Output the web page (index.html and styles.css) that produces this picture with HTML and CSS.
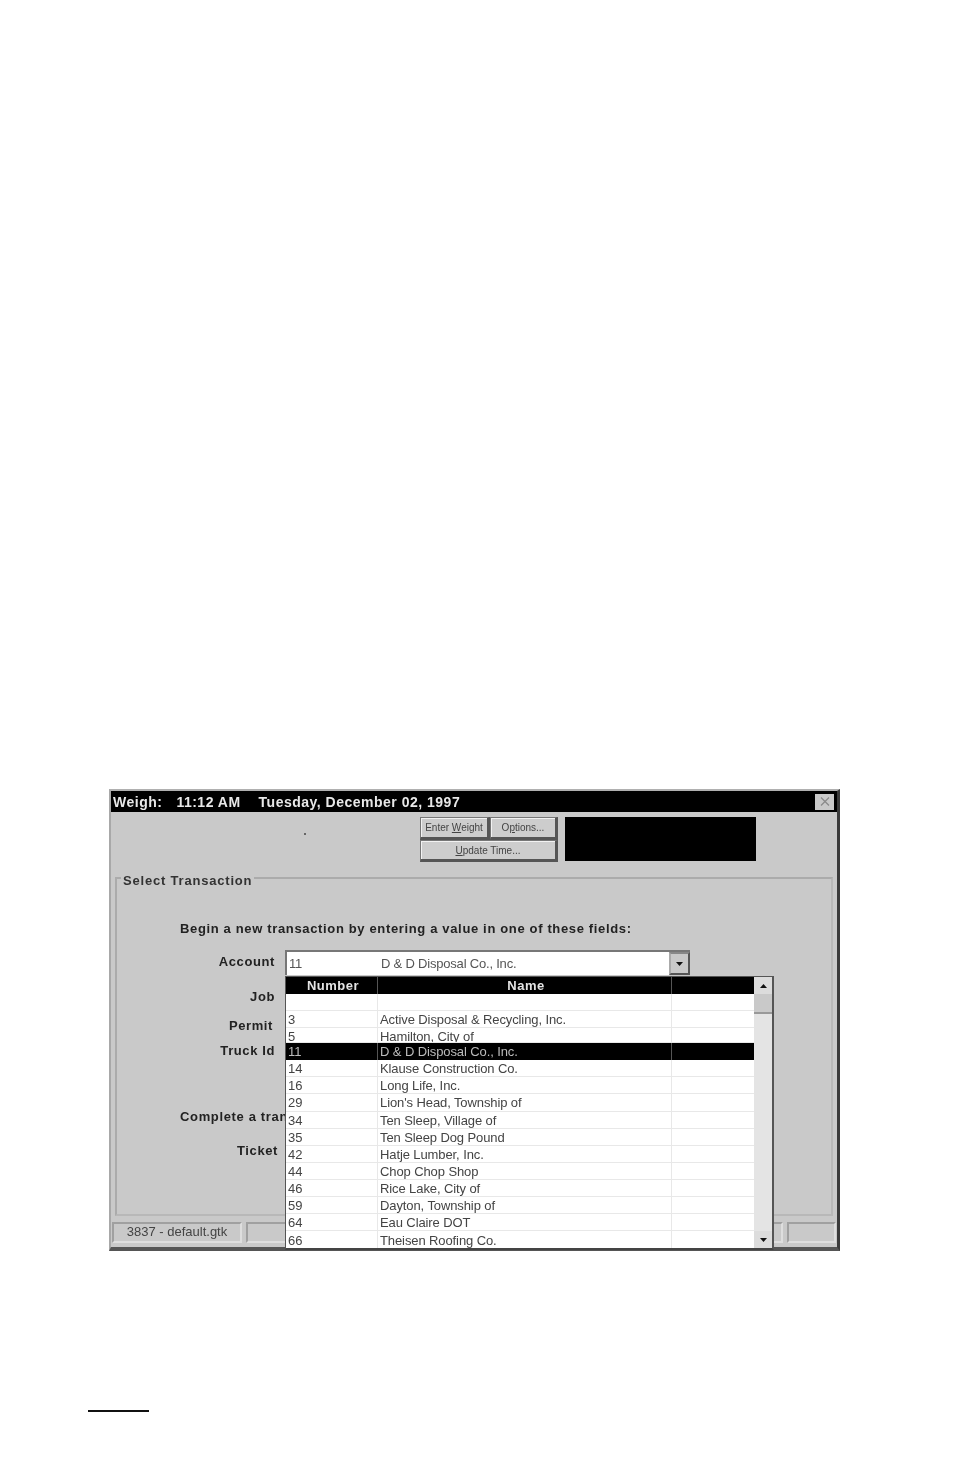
FILE: index.html
```html
<!DOCTYPE html>
<html lang="en">
<head>
<meta charset="utf-8">
<title>Weigh</title>
<link rel="stylesheet" href="styles.css">
</head>
<body>
<main class="page">
  <section class="window">
    <header class="titlebar">
      <span class="title-app">Weigh:</span>
      <span class="title-time">11:12 AM</span>
      <span class="title-date">Tuesday, December 02, 1997</span>
      <span class="close">
        <svg width="12" height="11" viewBox="0 0 12 11"><path d="M2 1.5 L10 9.5 M10 1.5 L2 9.5" stroke="#8a8a8a" stroke-width="1.3" fill="none"/></svg>
      </span>
    </header>
    <div class="toolbar">
      <span class="dot"></span>
      <div class="buttons">
        <button class="btn btn-enter">Enter <u>W</u>eight</button>
        <button class="btn btn-options">O<u>p</u>tions...</button>
        <button class="btn btn-update"><u>U</u>pdate Time...</button>
      </div>
      <div class="display"></div>
    </div>
    <div class="group">
      <div class="legend">Select Transaction</div>
      <p class="heading">Begin a new transaction by entering a value in one of these fields:</p>
      <div class="field field-account">
        <span class="label">Account</span>
        <div class="combo">
          <span class="combo-num">11</span>
          <span class="combo-name">D &amp; D Disposal Co., Inc.</span>
          <span class="combo-btn"><svg width="9" height="6" viewBox="0 0 9 6"><path d="M1 1 H8 L4.5 5 Z" fill="#111"/></svg></span>
        </div>
      </div>
      <div class="field field-job"><span class="label">Job</span></div>
      <div class="field field-permit"><span class="label label-permit">Permit</span></div>
      <div class="field field-truck"><span class="label">Truck Id</span></div>
      <p class="heading heading-complete">Complete a tran</p>
      <div class="field field-ticket"><span class="label label-ticket">Ticket</span></div>
    </div>
    <footer class="statusbar">
      <span class="panel panel-file">3837 - default.gtk</span>
      <span class="panel panel-main"></span>
      <span class="panel panel-end"></span>
    </footer>
    <div class="dropdown">
      <div class="list">
        <div class="list-head"><span>Number</span><span>Name</span><span></span></div>
        <div class="row"><span></span><span></span><span></span></div>
        <div class="row"><span>3</span><span>Active Disposal &amp; Recycling, Inc.</span><span></span></div>
        <div class="row row-short"><span>5</span><span>Hamilton, City of</span><span></span></div>
        <div class="row row-selected"><span>11</span><span>D &amp; D Disposal Co., Inc.</span><span></span></div>
        <div class="row"><span>14</span><span>Klause Construction Co.</span><span></span></div>
        <div class="row"><span>16</span><span>Long Life, Inc.</span><span></span></div>
        <div class="row"><span>29</span><span>Lion's Head, Township of</span><span></span></div>
        <div class="row"><span>34</span><span>Ten Sleep, Village of</span><span></span></div>
        <div class="row"><span>35</span><span>Ten Sleep Dog Pound</span><span></span></div>
        <div class="row"><span>42</span><span>Hatje Lumber, Inc.</span><span></span></div>
        <div class="row"><span>44</span><span>Chop Chop Shop</span><span></span></div>
        <div class="row"><span>46</span><span>Rice Lake, City of</span><span></span></div>
        <div class="row"><span>59</span><span>Dayton, Township of</span><span></span></div>
        <div class="row"><span>64</span><span>Eau Claire DOT</span><span></span></div>
        <div class="row row-last"><span>66</span><span>Theisen Roofing Co.</span><span></span></div>
      </div>
      <div class="scrollbar">
        <span class="sb-btn"><svg width="9" height="6" viewBox="0 0 9 6"><path d="M1 5 H8 L4.5 1 Z" fill="#111"/></svg></span>
        <span class="sb-thumb"></span>
        <span class="sb-track"></span>
        <span class="sb-btn"><svg width="9" height="6" viewBox="0 0 9 6"><path d="M1 1 H8 L4.5 5 Z" fill="#111"/></svg></span>
      </div>
    </div>
  </section>
  <div class="footnote-rule"></div>
</main>
</body>
</html>
```

FILE: styles.css
```css
* { box-sizing: border-box; }
html, body { margin: 0; padding: 0; background: #fff; }
body { font-family: "Liberation Sans", Arial, sans-serif; color: #111; }
.page { height: 1475px; padding-top: 789px; overflow: hidden; }

.window {
  position: relative;
  width: 731px;
  height: 462px;
  margin-left: 109px;
  background: #c9c9c9;
  border-top: 2px solid #b0b0b0;
  border-left: 2px solid #a8a8a8;
  border-right: 3px solid #3a3a3a;
  border-bottom: 4px solid #555;
  filter: blur(0.7px);
}

.titlebar {
  display: flex;
  align-items: center;
  height: 21px;
  background: #000;
  color: #e8e8e8;
  font-size: 14px;
  font-weight: bold;
  letter-spacing: 0.5px;
  padding-left: 2px;
}
.title-time { margin-left: 14px; }
.title-date { margin-left: 18px; }
.close {
  display: flex;
  align-items: center;
  justify-content: center;
  width: 19px;
  height: 16px;
  margin-left: auto;
  margin-right: 3px;
  background: #c9c9c9;
}

.toolbar { display: flex; height: 50px; padding-top: 5px; }
.dot { width: 2px; height: 2px; margin: 16px 0 0 193px; background: #666; }
.buttons {
  display: grid;
  grid-template-columns: 70px 68px;
  grid-template-rows: 23px 22px;
  margin-left: 114px;
}
.btn {
  margin: 0;
  padding: 0;
  background: #cdcdcd;
  color: #444;
  font-family: "Liberation Sans", Arial, sans-serif;
  font-size: 10px;
  border-style: solid;
  border-width: 1px 3px 3px 1px;
  border-color: #777 #555 #555 #777;
  box-shadow: inset 1px 1px 0 #f2f2f2;
}
.btn-update { grid-column: 1 / 3; }
.display { width: 191px; height: 44px; margin-left: 7px; background: #000; }

.group {
  width: 718px;
  height: 339px;
  margin: 15px 0 0 4px;
  border: 2px solid #ababab;
  border-bottom-color: #b8b8b8;
  border-right-color: #b8b8b8;
}
.legend {
  width: max-content;
  height: 16px;
  margin: -6px 0 0 4px;
  padding: 0 2px;
  background: #c9c9c9;
  color: #333;
  font-size: 13px;
  line-height: 16px;
  font-weight: bold;
  letter-spacing: 0.8px;
}
.heading {
  margin: 30px 0 0 63px;
  height: 20px;
  font-size: 13px;
  line-height: 20px;
  font-weight: bold;
  letter-spacing: 0.65px;
  color: #222;
}
.heading-complete { margin-top: 47px; }
.field { display: flex; align-items: center; }
.field-account { height: 25px; margin-top: 11px; }
.field-job { height: 20px; margin-top: 11px; }
.field-permit { height: 20px; margin-top: 9px; }
.field-truck { height: 20px; margin-top: 5px; }
.field-ticket { height: 20px; margin-top: 13px; }
.label {
  width: 158px;
  flex: none;
  text-align: right;
  font-size: 13px;
  font-weight: bold;
  letter-spacing: 0.6px;
  color: #222;
}
.field-account .label { margin-top: -2px; }
.label-permit { width: 156px; }
.label-ticket { width: 161px; }

.combo {
  display: flex;
  align-items: center;
  width: 405px;
  height: 25px;
  margin-left: 10px;
  background: #fff;
  border: 2px solid #777;
  border-right: none;
  border-bottom: none;
  font-size: 13px;
  letter-spacing: -0.2px;
  color: #555;
}
.combo-num { width: 94px; padding-left: 2px; flex: none; }
.combo-name { flex: 1; }
.combo-btn {
  display: flex;
  align-items: center;
  justify-content: center;
  width: 21px;
  height: 23px;
  background: #c9c9c9;
  border: 2px solid #555;
  border-top-color: #888;
  border-left-color: #aaa;
}

.statusbar { display: flex; gap: 4px; height: 21px; margin: 6px 0 0 1px; }
.panel {
  display: block;
  height: 21px;
  border: 2px solid #a0a0a0;
  border-right-color: #dedede;
  border-bottom-color: #dedede;
  font-size: 13px;
  line-height: 16px;
  color: #444;
  text-align: center;
}
.panel-file { width: 130px; }
.panel-main { width: 537px; }
.panel-end { width: 49px; margin-left: auto; margin-right: 1px; }

.dropdown {
  position: absolute;
  left: 174px;
  top: 185px;
  display: flex;
  width: 489px;
  height: 274px;
  background: #fff;
  border: 1px solid #555;
  border-right: 2px solid #555;
  border-bottom: 2px solid #444;
}
.list { width: 468px; flex: none; }
.list-head, .row {
  display: grid;
  grid-template-columns: 92px 294px 82px;
  font-size: 13px;
  color: #444;
}
.list-head {
  height: 17px;
  background: #000;
  color: #e4e4e4;
  line-height: 17px;
  font-weight: bold;
  letter-spacing: 0.5px;
  text-align: center;
}
.list-head span { border-right: 1px solid #555; padding-left: 3px; }
.list-head span:last-child { border-right: none; }
.row {
  height: 17.1px;
  line-height: 18px;
  border-bottom: 1px solid #e8e8e8;
  overflow: hidden;
  letter-spacing: -0.1px;
}
.row span { padding-left: 2px; border-right: 1px solid #e8e8e8; overflow: hidden; white-space: nowrap; }
.row span:last-child { border-right: none; }
.row-short { height: 15px; }
.row-selected { background: #000; color: #bbb; border-bottom: none; }
.row-selected span { border-right-color: #555; }
.row-last { border-bottom: none; line-height: 20px; }

.scrollbar { display: flex; flex-direction: column; width: 19px; background: #e4e4e4; }
.sb-btn {
  display: flex;
  align-items: center;
  justify-content: center;
  height: 17px;
  flex: none;
  background: #dcdcdc;
}
.sb-thumb { height: 20px; flex: none; background: #c9c9c9; border-bottom: 2px solid #999; }
.sb-track { flex: 1; }

.footnote-rule { width: 61px; height: 2px; margin: 159px 0 0 88px; background: #111; }
```
